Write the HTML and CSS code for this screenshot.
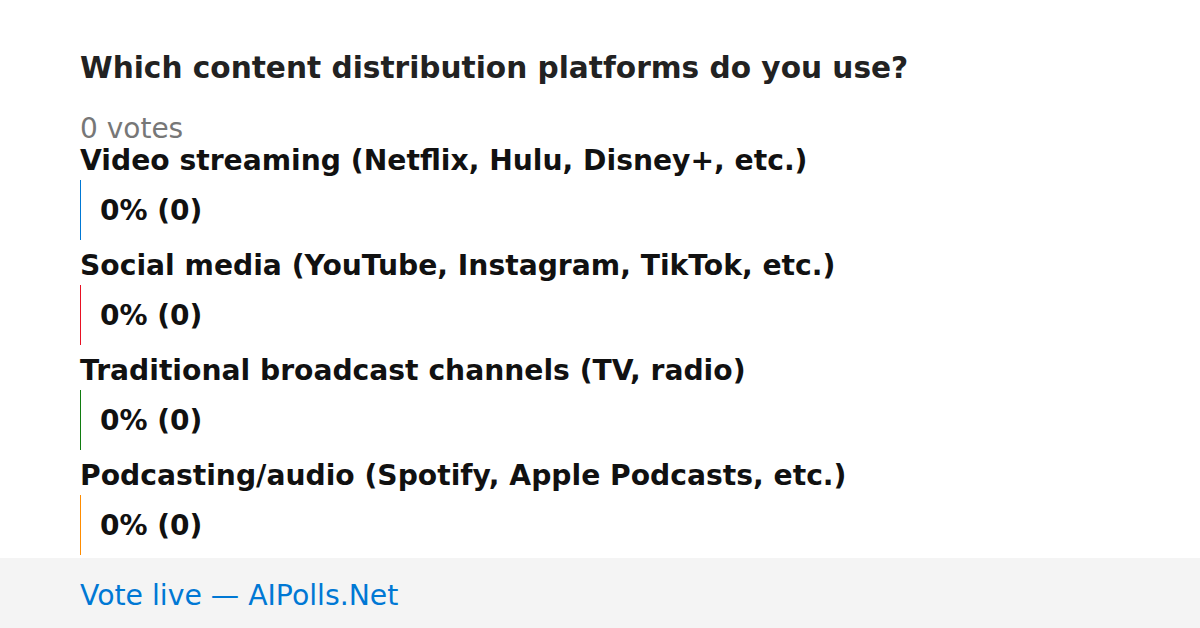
FILE: index.html
```html
<!DOCTYPE html>
<html>
<head>
<meta charset="utf-8">
<link rel="stylesheet" href="styles.css">
</head>
<body>
<div class="page">
  <main class="poll">
    <h1 class="title">Which content distribution platforms do you use?</h1>
    <div class="votes">0 votes</div>
    <div class="option">
      <div class="label">Video streaming (Netflix, Hulu, Disney+, etc.)</div>
      <div class="bar bar-blue"><span class="pct">0% (0)</span></div>
    </div>
    <div class="option">
      <div class="label">Social media (YouTube, Instagram, TikTok, etc.)</div>
      <div class="bar bar-red"><span class="pct">0% (0)</span></div>
    </div>
    <div class="option">
      <div class="label">Traditional broadcast channels (TV, radio)</div>
      <div class="bar bar-green"><span class="pct">0% (0)</span></div>
    </div>
    <div class="option">
      <div class="label">Podcasting/audio (Spotify, Apple Podcasts, etc.)</div>
      <div class="bar bar-orange"><span class="pct">0% (0)</span></div>
    </div>
  </main>
  <footer class="footer">Vote live — AIPolls.Net</footer>
</div>
</body>
</html>
```

FILE: styles.css
```css
html, body {
  margin: 0;
  padding: 0;
  background: #ffffff;
}
body {
  font-family: "DejaVu Sans", sans-serif;
  width: 1200px;
  height: 628px;
  overflow: hidden;
}
.page {
  display: flex;
  flex-direction: column;
  height: 628px;
}
.poll {
  flex: 1;
  padding: 48px 80px 0 80px;
  display: flex;
  flex-direction: column;
}
.title {
  margin: 0;
  font-size: 29.6px;
  font-weight: bold;
  line-height: 40px;
  color: #222222;
}
.votes {
  margin-top: 24px;
  font-size: 28px;
  line-height: 34px;
  color: #777777;
}
.option {
  display: flex;
  flex-direction: column;
  margin-bottom: 11px;
}
.option:last-child {
  margin-bottom: 0;
}
.label {
  font-size: 28.2px;
  font-weight: bold;
  line-height: 30px;
  color: #111111;
  margin-bottom: 4px;
}
.bar {
  height: 60px;
  display: flex;
  align-items: center;
  padding-left: 19px;
  border-left: 1px solid #0078d4;
}
.bar-blue { border-left-color: #0078d4; }
.bar-red { border-left-color: #e81123; }
.bar-green { border-left-color: #107c10; }
.bar-orange { border-left-color: #ff8c00; }
.pct {
  font-size: 28px;
  font-weight: bold;
  color: #111111;
}
.footer {
  height: 70px;
  box-sizing: border-box;
  padding-top: 4px;
  background: #f4f4f4;
  color: #0078d4;
  font-size: 28.3px;
  display: flex;
  align-items: center;
  padding-left: 80px;
}
```
